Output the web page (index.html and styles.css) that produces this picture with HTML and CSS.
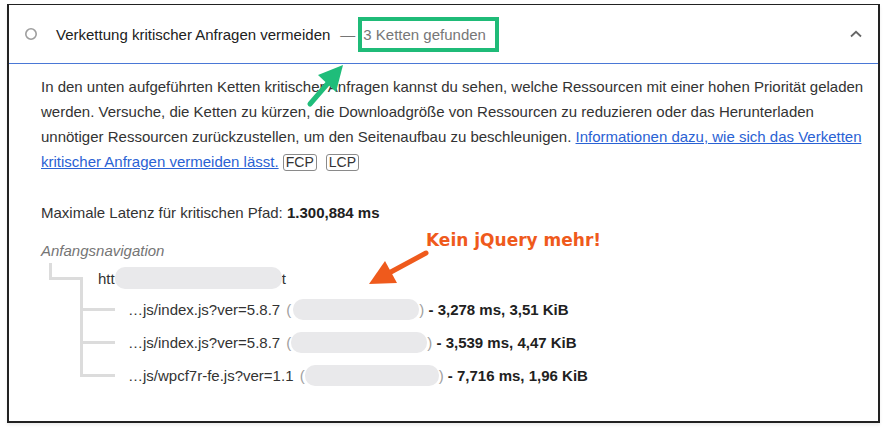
FILE: index.html
```html
<!DOCTYPE html>
<html lang="de">
<head>
<meta charset="utf-8">
<title>Verkettung kritischer Anfragen</title>
<link rel="stylesheet" href="styles.css">
</head>
<body>
<div class="card">
  <div class="header">
    <svg class="status-icon" width="14" height="14" viewBox="0 0 14 14"><circle cx="7" cy="7" r="5.2" fill="none" stroke="#9e9e9e" stroke-width="1.6"/></svg>
    <span class="title">Verkettung kritischer Anfragen vermeiden</span>
    <span class="sep">—</span>
    <span class="display-value">3 Ketten gefunden</span>
    <svg class="chevron" width="14" height="10" viewBox="0 0 14 10"><path d="M2 7.5 L7 2.8 L12 7.5" fill="none" stroke="#666" stroke-width="1.8"/></svg>
  </div>
  <div class="content">
    <p class="desc">In den unten aufgeführten Ketten kritischer Anfragen kannst du sehen, welche Ressourcen mit einer hohen Priorität geladen werden. Versuche, die Ketten zu kürzen, die Downloadgröße von Ressourcen zu reduzieren oder das Herunterladen unnötiger Ressourcen zurückzustellen, um den Seitenaufbau zu beschleunigen. <a class="link" href="#">Informationen dazu, wie sich das Verketten kritischer Anfragen vermeiden lässt.</a> <span class="badge">FCP</span><span class="badge badge-next">LCP</span></p>
    <p class="latency">Maximale Latenz für kritischen Pfad: <b>1.300,884 ms</b></p>
    <div class="tree">
      <div class="tree-title">Anfangsnavigation</div>
      <div class="node node-root">
        <div class="marker marker-root"><div class="half-top"></div><div class="half-bottom"></div></div>
        <span class="node-text">htt<span class="pill pill-root"></span>t</span>
      </div>
      <div class="node">
        <div class="marker"><div class="half-top"></div><div class="half-bottom"></div></div>
        <span class="node-text">…js/index.js?ver=5.8.7 <span class="paren open">(</span><span class="pill pill-a"></span><span class="paren">)</span><b> - 3,278 ms, 3,51 KiB</b></span>
      </div>
      <div class="node">
        <div class="marker"><div class="half-top"></div><div class="half-bottom"></div></div>
        <span class="node-text">…js/index.js?ver=5.8.7 <span class="paren open">(</span><span class="pill pill-b"></span><span class="paren">)</span><b> - 3,539 ms, 4,47 KiB</b></span>
      </div>
      <div class="node node-last">
        <div class="marker"><div class="half-top"></div><div class="half-bottom"></div></div>
        <span class="node-text">…js/wpcf7r-fe.js?ver=1.1 <span class="paren open">(</span><span class="pill pill-c"></span><span class="paren">)</span><b> - 7,716 ms, 1,96 KiB</b></span>
      </div>
    </div>
  </div>
</div>
<svg class="annotations" width="888" height="437" viewBox="0 0 888 437">
  <line x1="310" y1="104" x2="329" y2="82" stroke="#1fbd7a" stroke-width="5" stroke-linecap="round"/>
  <polygon points="343,65 318,75 336,92" fill="#1fbd7a"/>
  <line x1="426" y1="253" x2="389" y2="273" stroke="#ef5a1c" stroke-width="5" stroke-linecap="round"/>
  <polygon points="369,284 385,261 397,283" fill="#ef5a1c"/>
</svg>
<div class="note">Kein jQuery mehr!</div>
</body>
</html>
```

FILE: styles.css
```css
* { box-sizing: border-box; }

html, body {
  margin: 0;
  padding: 0;
  background: #ffffff;
}

body {
  position: relative;
  width: 888px;
  height: 437px;
  font-family: "Liberation Sans", Arial, sans-serif;
  color: #333333;
}

.card {
  margin: 4px 0 0 7px;
  width: 873px;
  height: 419px;
  border: 2px solid #222222;
  border-top-width: 1px;
  background: #ffffff;
  box-shadow: 0 2px 3px rgba(0,0,0,0.08);
}

.header {
  display: flex;
  align-items: center;
  height: 59px;
  padding: 0 15px 0 15px;
  border-bottom: 1px solid #4a78d6;
  font-size: 15px;
}

.status-icon {
  flex: none;
  margin-right: 18px;
}

.title {
  color: #212121;
}

.sep {
  color: #757575;
  margin: 0 3px 0 10px;
}

.display-value {
  display: inline-block;
  color: #777777;
  border: 4px solid #1fbb78;
  padding: 5px 9px 5px 1px;
  line-height: 17px;
}

.chevron {
  margin-left: auto;
  flex: none;
}

.content {
  padding: 10px 14px 0 32px;
  font-size: 15px;
  line-height: 25px;
}

.desc {
  margin: 0;
}

.link {
  color: #2a62d4;
  text-decoration: underline;
}

.badge {
  display: inline-block;
  font-size: 14px;
  line-height: 15px;
  padding: 0 2px;
  border: 1px solid #8a8a8a;
  border-radius: 3px;
  color: #333;
  vertical-align: 0;
}

.badge-next {
  margin-left: 9px;
}

.latency {
  margin: 26px 0 0 0;
}

.latency b {
  color: #212121;
}

.tree-title {
  margin-top: 13px;
  font-style: italic;
  color: #757575;
}

.node {
  display: flex;
  align-items: stretch;
  height: 33px;
}

.node-root {
  height: 31px;
}

.marker {
  display: flex;
  flex-direction: column;
  width: 35px;
  margin-left: 39px;
  flex: none;
}

.half-top {
  height: 17px;
  border-left: 3px solid #dcdcdc;
  border-bottom: 3px solid #dcdcdc;
}

.half-bottom {
  flex: 1;
  border-left: 3px solid #dcdcdc;
}

.node-last .half-bottom {
  border-left: none;
}

.marker-root {
  width: 34px;
  margin-left: 8px;
}

.marker-root .half-bottom {
  border-left: none;
  border-right: 3px solid #dcdcdc;
}

.node-text {
  display: flex;
  align-items: center;
  white-space: pre;
  margin-left: 13px;
  padding-bottom: 1px;
  height: 31px;
}

.node-root .node-text {
  margin-left: 15px;
}

.node-text b {
  color: #212121;
}

.paren {
  color: #a0a0a0;
}

.paren.open {
  margin-left: 2px;
}

.pill {
  display: inline-block;
  height: 21px;
  border-radius: 10px;
  background: #e9e9eb;
  filter: blur(0.6px);
}

.pill-root { width: 167px; height: 22px; }
.pill-a { width: 126px; margin-left: 2px; }
.pill-b { width: 136px; }
.pill-c { width: 134px; }

.annotations {
  position: absolute;
  left: 0;
  top: 0;
  pointer-events: none;
}

.note {
  position: absolute;
  left: 426px;
  top: 229px;
  font-family: "DejaVu Sans", sans-serif;
  font-weight: bold;
  font-size: 17px;
  line-height: 22px;
  color: #ef5a1c;
}
```
